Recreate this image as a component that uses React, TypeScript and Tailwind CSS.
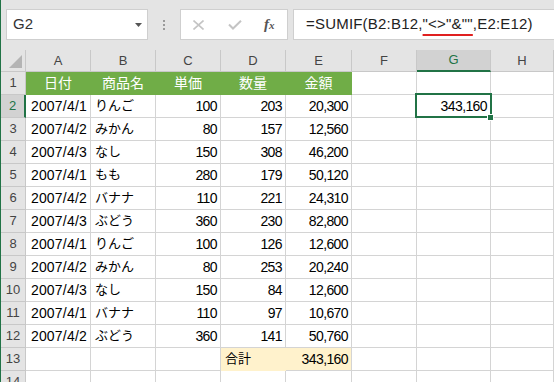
import React from "react";

const rows: [string, string, string, string, string][] = [
  ["2007/4/1", "りんご", "100", "203", "20,300"],
  ["2007/4/2", "みかん", "80", "157", "12,560"],
  ["2007/4/3", "なし", "150", "308", "46,200"],
  ["2007/4/1", "もも", "280", "179", "50,120"],
  ["2007/4/2", "バナナ", "110", "221", "24,310"],
  ["2007/4/3", "ぶどう", "360", "230", "82,800"],
  ["2007/4/1", "りんご", "100", "126", "12,600"],
  ["2007/4/2", "みかん", "80", "253", "20,240"],
  ["2007/4/3", "なし", "150", "84", "12,600"],
  ["2007/4/1", "バナナ", "110", "97", "10,670"],
  ["2007/4/2", "ぶどう", "360", "141", "50,760"],
];

const cell = "h-[23px] border-r border-b border-[#d4d4d4] flex items-center overflow-hidden whitespace-nowrap";
const num = "justify-end pr-[3px] tracking-[-0.6px]";
const rh = "h-[23px] bg-[#e4e4e4] border-r border-b border-[#c8c8c8] flex items-center justify-center text-[13px] text-[#444]";

function RowHead({ n, sel }: { n: number; sel?: boolean }) {
  if (sel) {
    return (
      <div className="h-[23px] bg-[#d2d2d2] border-r-2 border-r-[#217346] border-b border-b-[#c8c8c8] flex items-center justify-center text-[13px] text-[#217346]">
        {n}
      </div>
    );
  }
  return <div className={rh}>{n}</div>;
}

export default function App() {
  const letters = ["A", "B", "C", "D", "E", "F", "G", "H"];
  return (
    <div
      className="w-[554px] h-[382px] overflow-hidden bg-white border-l border-[#217346]"
      style={{ fontFamily: '"Liberation Sans", "Noto Sans CJK JP", sans-serif' }}
    >
      {/* toolbar */}
      <div className="h-[50px] bg-[#e4e4e4] flex items-start pt-[9px]">
        <div className="ml-[5px] w-[142px] h-[31px] bg-white border border-[#cfcfcf] flex items-center pl-[6px] pr-[5px]">
          <span className="text-[15px] text-[#333] flex-1">G2</span>
          <svg width="7" height="4" viewBox="0 0 7 4">
            <polygon points="0,0 7,0 3.5,4" fill="#555" />
          </svg>
        </div>
        <div className="w-[32px] h-[31px] flex flex-col items-center justify-center gap-[2px]">
          <div className="w-[2px] h-[2px] bg-[#9a9a9a]" />
          <div className="w-[2px] h-[2px] bg-[#9a9a9a]" />
          <div className="w-[2px] h-[2px] bg-[#9a9a9a]" />
        </div>
        <div className="w-[108px] h-[31px] bg-white border border-[#cfcfcf] flex items-center">
          <svg width="11" height="10" viewBox="0 0 11 10" className="ml-[12px]">
            <path d="M0.5 0.5 L10.5 9.5 M10.5 0.5 L0.5 9.5" stroke="#c4c4c4" strokeWidth="1.6" fill="none" />
          </svg>
          <svg width="14" height="10" viewBox="0 0 14 10" className="ml-[24px]">
            <path d="M1 4.5 L5 8.5 L13 0.8" stroke="#c4c4c4" strokeWidth="2" fill="none" />
          </svg>
          <span className="ml-[22px] text-[15px] text-[#555] italic font-bold leading-none" style={{ fontFamily: '"Liberation Serif", serif' }}>
            f<span className="text-[11px]">x</span>
          </span>
        </div>
        <div className="ml-[5px] flex-1 h-[31px] bg-white border-t border-b border-l border-[#cfcfcf] flex items-center pl-[12px]">
          <span className="text-[15px] text-[#222] tracking-[0.2px] whitespace-nowrap">
            =SUMIF(B2:B12,
            <span className="underline decoration-[#e02020] decoration-[1.5px] underline-offset-[5px]">"&lt;&gt;"&amp;""</span>
            ,E2:E12)
          </span>
        </div>
      </div>

      {/* sheet */}
      <div className="grid grid-cols-[25px_65px_65px_65px_65px_66px_65px_74px_1fr]">
        {/* column headers */}
        <div className="h-[22px] bg-[#e4e4e4] border-r border-b border-[#c8c8c8] relative">
          <svg width="13" height="13" viewBox="0 0 13 13" className="absolute right-[3px] bottom-[3px]">
            <polygon points="13,0 13,13 0,13" fill="#b4b4b4" />
          </svg>
        </div>
        {letters.map((l) =>
          l === "G" ? (
            <div key={l} className="h-[22px] bg-[#d2d2d2] border-r border-r-[#c8c8c8] border-b-2 border-b-[#217346] flex items-center justify-center text-[13px] text-[#217346]">
              {l}
            </div>
          ) : (
            <div key={l} className="h-[22px] bg-[#e4e4e4] border-r border-b border-[#c8c8c8] flex items-center justify-center text-[13px] text-[#444]">
              {l}
            </div>
          )
        )}

        {/* row 1 */}
        <RowHead n={1} />
        {["日付", "商品名", "単価", "数量", "金額"].map((t) => (
          <div key={t} className="h-[23px] bg-[#70ad47] border-r border-b border-[#70ad47] flex items-center justify-center text-[14px] text-white">
            {t}
          </div>
        ))}
        <div className={cell} />
        <div className={cell} />
        <div className={cell} />

        {/* data rows */}
        {rows.map((r, i) => (
          <React.Fragment key={i}>
            <RowHead n={i + 2} sel={i === 0} />
            <div className={`${cell} justify-end pr-[3px] text-[14px] text-black tracking-[0.2px]`}>{r[0]}</div>
            <div className={`${cell} pl-[4px] text-[13px] text-black`}>{r[1]}</div>
            <div className={`${cell} ${num} text-[14px] text-black`}>{r[2]}</div>
            <div className={`${cell} ${num} text-[14px] text-black`}>{r[3]}</div>
            <div className={`${cell} ${num} text-[14px] text-black`}>{r[4]}</div>
            <div className={cell} />
            {i === 0 ? (
              <div className={`${cell} ${num} text-[14px] text-black relative overflow-visible`}>
                343,160
                <div className="absolute -left-[2px] -top-[2px] w-[77px] h-[25px] border-2 border-[#217346]" />
                <div className="absolute left-[70px] top-[19px] w-[7px] h-[7px] bg-[#217346] border border-white" />
              </div>
            ) : (
              <div className={cell} />
            )}
            <div className={cell} />
          </React.Fragment>
        ))}

        {/* row 13 */}
        <RowHead n={13} />
        <div className={cell} />
        <div className={cell} />
        <div className={cell} />
        <div className="h-[23px] bg-[#fff2cc] border-r border-b border-[#fff2cc] flex items-center pl-[4px] text-[13px] text-black">合計</div>
        <div className={`h-[23px] bg-[#fff2cc] border-r border-b border-r-[#d4d4d4] border-b-[#d4d4d4] flex items-center ${num} text-[14px] text-black`}>343,160</div>
        <div className={cell} />
        <div className={cell} />
        <div className={cell} />

        {/* row 14 */}
        <RowHead n={14} />
        {[0, 1, 2, 3, 4, 5, 6, 7].map((k) => (
          <div key={k} className={cell} />
        ))}
      </div>
    </div>
  );
}
